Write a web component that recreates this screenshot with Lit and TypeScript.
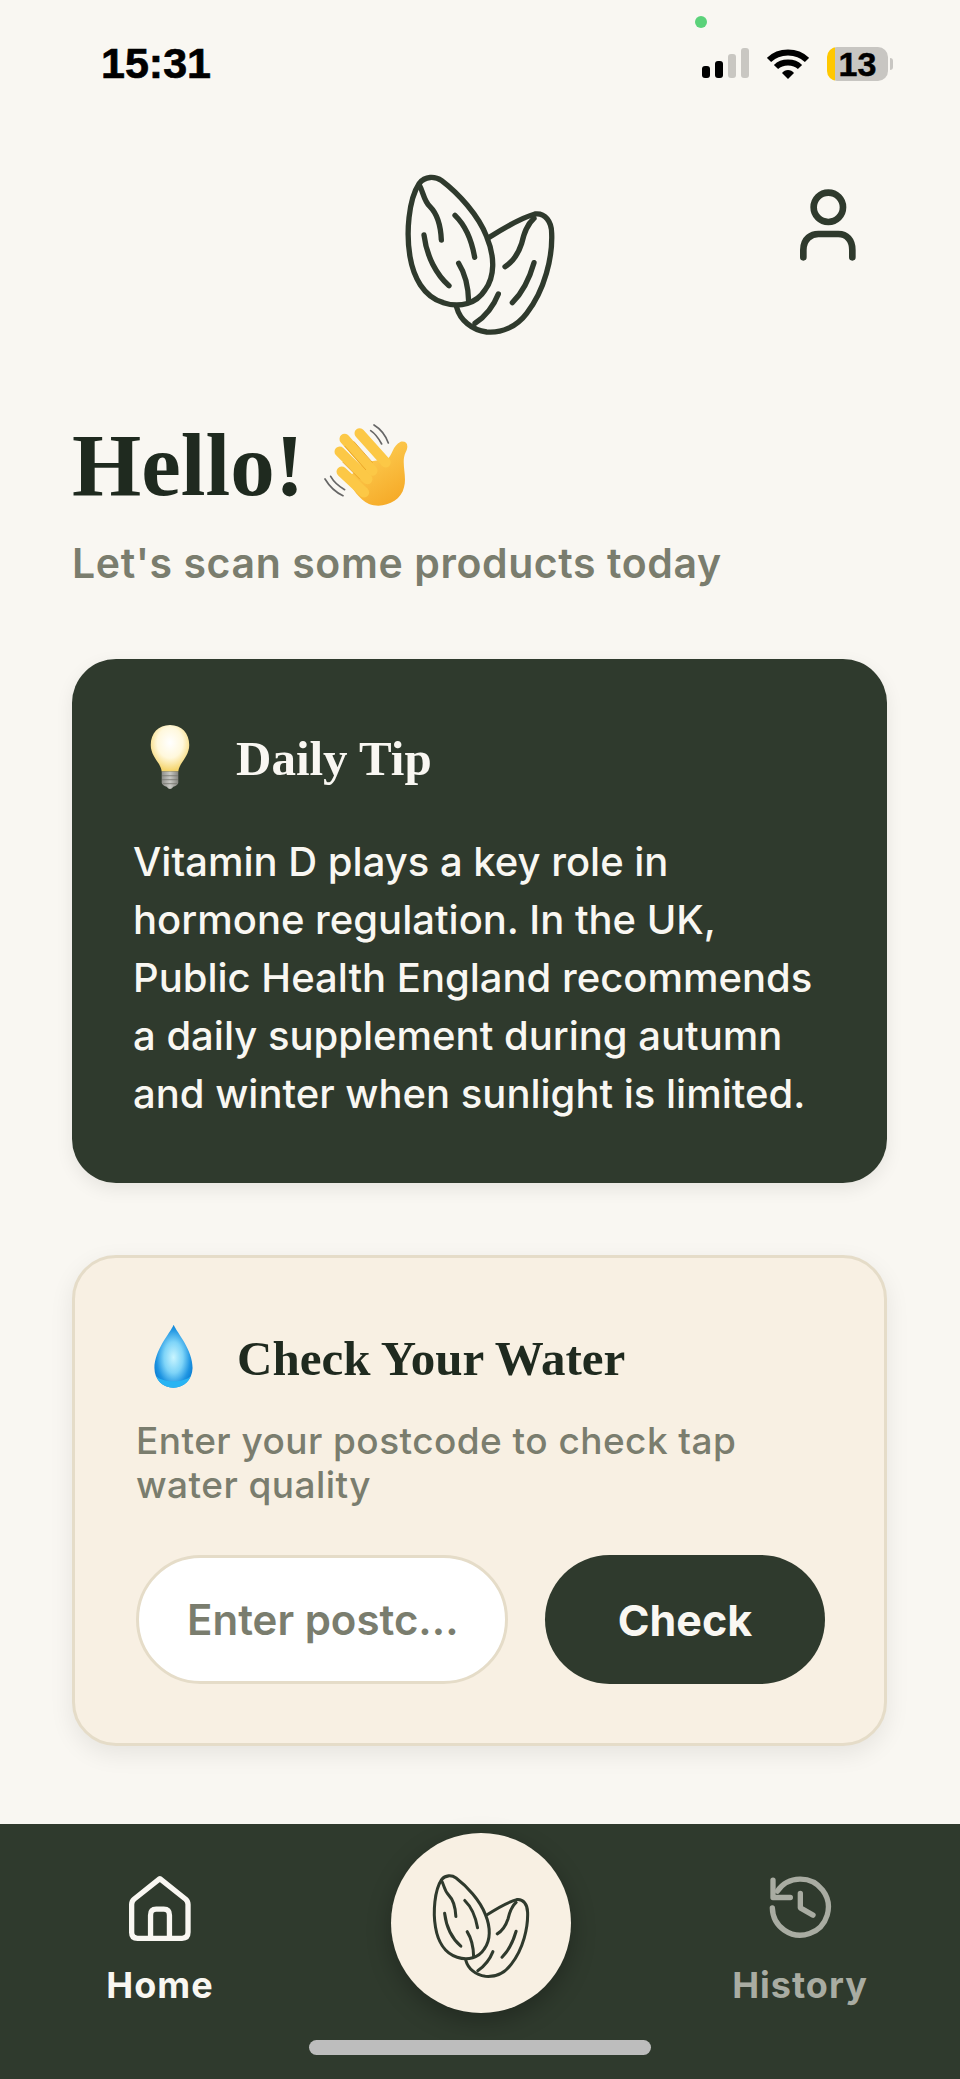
import { LitElement, html, svg, css } from 'lit'
import { customElement } from 'lit/decorators.js'

const almond = (size: number, weight = 16) => html`
  <svg width=${size} height=${size} viewBox="0 0 600 600" fill="none" stroke="#2f3a2d" stroke-width=${weight} stroke-linecap="round" stroke-linejoin="round">
    <path d="M118 100C135 78 165 78 185 92C235 130 295 195 320 260C345 320 345 380 315 420C290 460 240 475 190 458C130 440 100 380 90 320C78 250 85 150 118 100Z" />
    <path d="M118 105C130 125 130 150 150 170C170 190 182 225 184 270" />
    <path d="M225 196C255 225 275 270 284 322" />
    <path d="M132 255C140 320 170 375 207 407" />
    <path d="M236 340C255 370 265 410 266 455" />
    <path d="M328 262C370 235 420 205 465 192C495 188 515 215 515 250C518 320 495 420 440 490C410 530 365 550 320 546C275 540 240 510 230 472" />
    <path d="M462 205C440 225 432 250 425 280C415 310 400 335 375 350" />
    <path d="M462 338C450 380 430 425 397 458" />
    <path d="M355 432C340 470 315 500 285 520" />
  </svg>
`

const waveEmoji = svg`
  <defs>
    <linearGradient id="hand" x1="0" y1="0" x2="0.6" y2="1">
      <stop offset="0" stop-color="#ffd65e" />
      <stop offset="1" stop-color="#f6ac2a" />
    </linearGradient>
  </defs>
  <g fill="none" stroke="#666" stroke-width="5" stroke-linecap="round">
    <path d="M1005 78C1025 90 1040 110 1048 132" />
    <path d="M995 95C1010 105 1020 120 1028 135" />
    <path d="M858 240C870 260 890 280 912 290" />
    <path d="M875 232C885 250 900 262 917 272" />
  </g>
  <path fill="url(#hand)" d="M975 190L1045 180C1060 170 1060 140 1085 128C1105 125 1110 140 1100 160C1085 190 1105 230 1095 265C1085 310 1030 330 990 315C960 300 940 270 925 240Z" />
  <g fill="none" stroke="#fcc846" stroke-width="31" stroke-linecap="round">
    <path d="M962 103L1040 190" />
    <path d="M917 120L1000 215" />
    <path d="M902 158L985 240" />
    <path d="M908 218L975 280" />
  </g>
  <g fill="none" stroke="#e79f1f" stroke-width="2.5" stroke-linecap="round">
    <path d="M945 128L1000 190" />
    <path d="M918 142L980 212" />
    <path d="M912 190L962 240" />
  </g>
`

const bulbEmoji = svg`
  <defs>
    <radialGradient id="glass" cx="0.5" cy="0.38" r="0.6">
      <stop offset="0" stop-color="#ffffff" />
      <stop offset="0.55" stop-color="#fff8dc" />
      <stop offset="1" stop-color="#f5d56e" />
    </radialGradient>
    <linearGradient id="base" x1="0" y1="0" x2="1" y2="0">
      <stop offset="0" stop-color="#8f8f8a" />
      <stop offset="0.5" stop-color="#c9c9c4" />
      <stop offset="1" stop-color="#85857f" />
    </linearGradient>
  </defs>
  <path fill="url(#glass)" d="M330 225C295 225 272 250 272 285C272 320 303 340 305 365H355C357 340 388 320 388 285C388 250 365 225 330 225Z" />
  <path fill="url(#base)" d="M305 365H355V400Q350 410 340 411Q335 418 330 418Q325 418 320 411Q310 410 305 400Z" />
  <path fill="none" stroke="#77776f" stroke-width="2.5" d="M306 378H354M306 390H354M309 402H351" />
`

const dropEmoji = svg`
  <defs>
    <radialGradient id="water" cx="0.5" cy="0.52" r="0.55">
      <stop offset="0" stop-color="#c9f5ff" />
      <stop offset="0.45" stop-color="#7ed4f8" />
      <stop offset="0.8" stop-color="#1f95e2" />
      <stop offset="1" stop-color="#0d7fd3" />
    </radialGradient>
  </defs>
  <path fill="url(#water)" d="M339 224C350 250 397 300 396 355C395 390 370 414 338 414C306 414 281 390 281 355C281 300 328 250 339 224Z" />
  <path fill="#29b4f3" d="M286 378C300 400 376 400 391 378C384 400 362 414 338 414C314 414 293 400 286 378Z" />
`

@customElement('status-bar')
export class StatusBar extends LitElement {
  static styles = css`
    :host {
      display: flex;
      justify-content: space-between;
      height: 150px;
      padding: 42px 67px 0 101px;
      box-sizing: border-box;
      position: relative;
      font-family: 'Liberation Sans', Arial, sans-serif;
      font-weight: 700;
      color: #000;
    }

    .time {
      font-size: 43px;
      line-height: 43px;
      -webkit-text-stroke: 0.7px #000;
    }

    .dot {
      position: absolute;
      left: 695px;
      top: 16px;
      width: 12px;
      height: 12px;
      border-radius: 50%;
      background: #5bd27a;
    }

    .right {
      display: flex;
      align-items: flex-start;
      height: 40px;
    }

    .signal {
      display: flex;
      align-items: flex-end;
      gap: 5px;
      height: 31px;
      margin-top: 5px;
      margin-right: 18px;
    }

    .signal i {
      display: block;
      width: 8px;
      border-radius: 3px;
      background: #000;
    }

    .signal i.off {
      background: #c9c7c2;
    }

    .wifi {
      margin-top: 6px;
      margin-right: 18px;
    }

    .battery {
      display: flex;
      align-items: center;
      justify-content: center;
      width: 61px;
      height: 34px;
      margin-top: 5px;
      border-radius: 10px;
      background: linear-gradient(90deg, #ffc800 8px, #c8c6c2 8px);
      font-size: 34px;
      line-height: 34px;
      -webkit-text-stroke: 0.5px #000;
    }

    .cap {
      width: 3px;
      height: 12px;
      margin: 16px 0 0 2px;
      border-radius: 0 3px 3px 0;
      background: #c8c6c2;
    }
  `

  render() {
    return html`
      <div class="time">15:31</div>
      <span class="dot"></span>
      <div class="right">
        <div class="signal">
          <i style="height:12px"></i>
          <i style="height:17px"></i>
          <i class="off" style="height:24px"></i>
          <i class="off" style="height:30px"></i>
        </div>
        <svg class="wifi" width="42" height="31" viewBox="0 0 42 31" fill="none" stroke="#000" stroke-width="6">
          <path d="M2 12C12 2 30 2 40 12" />
          <path d="M9 19C15 13 27 13 33 19" />
          <path d="M15 25L21 31L27 25C24 21 18 21 15 25Z" fill="#000" stroke="none" />
        </svg>
        <div class="battery">13</div>
        <div class="cap"></div>
      </div>
    `
  }
}

@customElement('bottom-nav')
export class BottomNav extends LitElement {
  static styles = css`
    :host {
      display: grid;
      grid-template-columns: 1fr 1fr 1fr;
      height: 255px;
      position: relative;
      background: #2f3a2d;
      font-family: Inter, 'Liberation Sans', sans-serif;
    }

    .item {
      display: flex;
      flex-direction: column;
      align-items: center;
      padding-top: 51px;
      font-size: 36px;
      font-weight: 700;
      line-height: 44px;
      color: #f9f7f2;
    }

    .item.muted {
      color: #a9aca2;
    }

    .item span {
      margin-top: 21px;
      letter-spacing: 1px;
    }

    .scan {
      justify-self: center;
      display: flex;
      align-items: center;
      justify-content: center;
      width: 180px;
      height: 180px;
      margin: 9px 0 0 2px;
      border-radius: 50%;
      background: #f8f0e3;
      box-shadow: 0 8px 24px rgba(0, 0, 0, 0.28);
    }

    .home-bar {
      position: absolute;
      left: 309px;
      top: 216px;
      width: 342px;
      height: 15px;
      border-radius: 8px;
      background: #bdbdbd;
    }
  `

  render() {
    return html`
      <div class="item">
        <svg width="63" height="67" viewBox="390 190 190 200" fill="none" stroke="#f9f7f2" stroke-width="16" stroke-linejoin="round">
          <path d="M483 200L405 262Q398 268 398 278V362Q398 380 416 380H550Q568 380 568 362V278Q568 268 561 262Z" />
          <path d="M455 378V310Q455 292 472 292H495Q512 292 512 310V378" />
        </svg>
        <span>Home</span>
      </div>
      <div class="scan">${almond(130, 14)}</div>
      <div class="item muted">
        <svg width="65" height="67" viewBox="865 195 195 200" fill="none" stroke="#a9aca2" stroke-width="16" stroke-linecap="round" stroke-linejoin="round">
          <path d="M893 243A84 84 0 1 1 878 293" />
          <path d="M880 210V262H932" />
          <path d="M962 250V293L1000 315" />
        </svg>
        <span>History</span>
      </div>
      <div class="home-bar"></div>
    `
  }
}

@customElement('app-root')
export class AppRoot extends LitElement {
  static styles = css`
    :host {
      display: flex;
      flex-direction: column;
      min-height: 100vh;
      background: #f9f7f2;
      font-family: Inter, 'Liberation Sans', sans-serif;
    }

    main {
      flex: 1;
      display: flex;
      flex-direction: column;
      padding: 0 73px 0 72px;
    }

    .top {
      display: grid;
      grid-template-columns: 1fr auto 1fr;
      margin: 0 -73px 0 -72px;
    }

    .top .logo {
      grid-column: 2;
    }

    .profile {
      justify-self: end;
      margin: 20px 80px 0 0;
    }

    .greeting {
      display: flex;
      align-items: center;
      gap: 20px;
      height: 110px;
      margin-top: 56px;
    }

    h1,
    h2 {
      margin: 0;
      font-family: 'Liberation Serif', 'Times New Roman', serif;
      font-weight: 700;
      color: #1f2a1f;
    }

    h1 {
      font-size: 89px;
      line-height: 110px;
    }

    .sub {
      margin: 18px 0 0;
      font-size: 41px;
      font-weight: 600;
      line-height: 50px;
      letter-spacing: 0.6px;
      color: #7a7d6e;
    }

    .card-head {
      display: flex;
      align-items: center;
      gap: 29px;
    }

    .emoji {
      display: flex;
      justify-content: center;
      width: 74px;
    }

    h2 {
      margin-top: 6px;
      font-size: 49px;
      line-height: 60px;
    }

    .tip {
      margin-top: 71px;
      padding: 60px 59px 60px 61px;
      border-radius: 44px;
      background: #2f3a2d;
      box-shadow: 0 6px 18px rgba(0, 0, 0, 0.08);
    }

    .tip .card-head {
      height: 74px;
    }

    .tip h2 {
      color: #f9f7f2;
    }

    .tip p {
      margin: 40px 0 0;
      font-size: 40px;
      font-weight: 500;
      line-height: 58px;
      color: #f9f7f2;
    }

    .water {
      margin-top: 72px;
      padding: 59px 59px 59px 61px;
      border: 3px solid #e5dcc8;
      border-radius: 44px;
      background: #f8f0e3;
      box-shadow: 0 8px 24px rgba(0, 0, 0, 0.08);
    }

    .water .card-head {
      height: 78px;
      gap: 27px;
    }

    .water p {
      margin: 24px 0 0;
      font-size: 37px;
      font-weight: 500;
      line-height: 44px;
      letter-spacing: 0.45px;
      color: #7a7d6e;
    }

    .form {
      display: flex;
      gap: 37px;
      margin-top: 48px;
    }

    .input,
    .check {
      display: flex;
      align-items: center;
      height: 129px;
      box-sizing: border-box;
      border-radius: 65px;
      font-size: 42px;
      font-weight: 600;
    }

    .input {
      width: 372px;
      padding-left: 48px;
      border: 3px solid #e5dcc8;
      background: #fff;
      color: #7a7d6e;
    }

    .check {
      justify-content: center;
      width: 280px;
      background: #2f3a2d;
      color: #f9f7f2;
      font-size: 43px;
      font-weight: 700;
    }
  `

  render() {
    return html`
      <status-bar></status-bar>
      <main>
        <div class="top">
          <div class="logo">${almond(200)}</div>
          <svg class="profile" width="100" height="110" viewBox="0 0 300 330" fill="none" stroke="#2f3a2d" stroke-width="20" stroke-linecap="round">
            <circle cx="145" cy="112" r="44" />
            <path d="M70 262V240C70 205 95 192 115 192H175C200 192 217 210 217 240V262" />
          </svg>
        </div>
        <div class="greeting">
          <h1>Hello!</h1>
          <svg width="85" height="85" viewBox="855 72 255 255">${waveEmoji}</svg>
        </div>
        <p class="sub">Let's scan some products today</p>
        <section class="tip">
          <div class="card-head">
            <div class="emoji">
              <svg width="40" height="65" viewBox="270 222 120 196">${bulbEmoji}</svg>
            </div>
            <h2>Daily Tip</h2>
          </div>
          <p>Vitamin D plays a key role in hormone regulation. In the UK, Public Health England recommends a daily supplement during autumn and winter when sunlight is limited.</p>
        </section>
        <section class="water">
          <div class="card-head">
            <div class="emoji">
              <svg width="39" height="64" viewBox="280 222 117 193">${dropEmoji}</svg>
            </div>
            <h2>Check Your Water</h2>
          </div>
          <p>Enter your postcode to check tap water quality</p>
          <div class="form">
            <div class="input">Enter postc...</div>
            <div class="check">Check</div>
          </div>
        </section>
      </main>
      <bottom-nav></bottom-nav>
    `
  }
}
